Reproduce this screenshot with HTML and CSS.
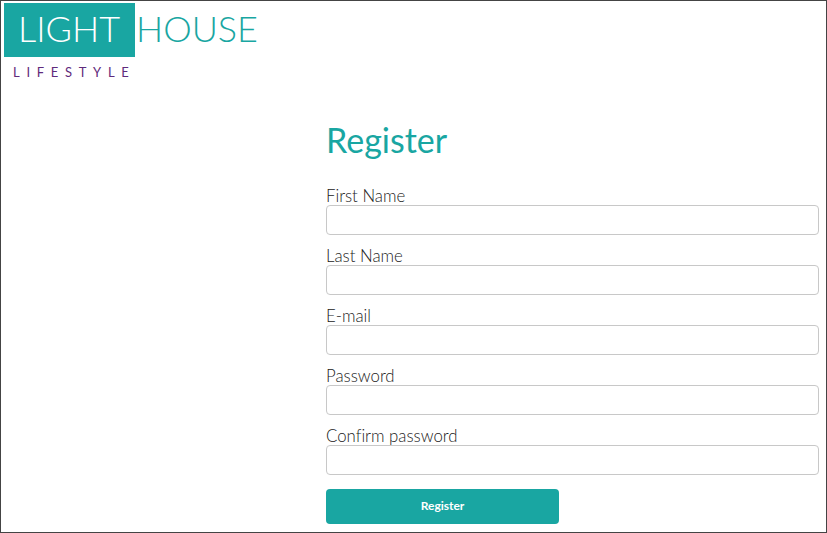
FILE: index.html
```html
<!DOCTYPE html>
<html lang="en">
<head>
  <meta charset="UTF-8">
  <meta name="viewport" content="width=device-width, initial-scale=1.0">
  <title>Register</title>
  <link rel="stylesheet" href="styles.css">
</head>
<body>

  <div class="page">
    <!-- Logo -->
    <div class="logo">
      <div class="logo-top">
        <span class="logo-light">LIGHT</span>
        <span class="logo-house">HOUSE</span>
      </div>
      <div class="logo-sub">LIFESTYLE</div>
    </div>

    <!-- Register Form -->
    <form class="register-form">
      <h2>Register</h2>
      <div class="field">
        <label for="first-name">First Name</label>
        <input type="text" id="first-name">
      </div>
      <div class="field">
        <label for="last-name">Last Name</label>
        <input type="text" id="last-name">
      </div>
      <div class="field">
        <label for="email">E-mail</label>
        <input type="email" id="email">
      </div>
      <div class="field">
        <label for="password">Password</label>
        <input type="password" id="password">
      </div>
      <div class="field">
        <label for="confirm-password">Confirm password</label>
        <input type="password" id="confirm-password">
      </div>
      <button type="button">Register</button>
    </form>
  </div>

</body>
</html>
```

FILE: styles.css
```css
html, body {
  margin: 0;
  padding: 0;
}

body {
  font-family: 'Lato', 'Liberation Sans', sans-serif;
  font-variant-ligatures: none;
  background: #fff;
  color: #222;
}

.page {
  box-sizing: border-box;
  width: 827px;
  height: 533px;
  border: 1px solid #444;
  padding: 2px 7px 0 3px;
  overflow: hidden;
}

.logo-top {
  display: flex;
  align-items: flex-start;
}

.logo-light {
  box-sizing: border-box;
  width: 131px;
  height: 54px;
  padding: 3px 0 0 14px;
  background: #19a6a2;
  color: #fff;
  font-size: 36px;
  font-weight: 300;
  line-height: 44px;
}

.logo-house {
  padding: 3px 0 0 1px;
  color: #19a6a2;
  font-size: 36px;
  font-weight: 300;
  line-height: 44px;
}

.logo-sub {
  margin: 7px 0 0 9px;
  color: #5f2a7c;
  font-size: 13px;
  line-height: 16px;
  letter-spacing: 6.7px;
}

.register-form {
  margin: 40px 0 0 322px;
}

.register-form h2 {
  margin: 0 0 26px;
  color: #19a6a2;
  font-size: 34px;
  font-weight: 400;
  line-height: 40px;
}

.field {
  margin-bottom: 11px;
}

.field label {
  display: block;
  height: 19px;
  font-size: 16.8px;
  font-weight: 300;
  line-height: 20px;
}

.field input {
  display: block;
  box-sizing: border-box;
  width: 493px;
  height: 30px;
  border: 1px solid #c8c8c8;
  border-radius: 4px;
  background: #fff;
}

.register-form button {
  display: block;
  width: 233px;
  height: 35px;
  margin-top: 14px;
  padding-bottom: 3px;
  border: none;
  border-radius: 4px;
  background: #19a6a2;
  color: #fff;
  font-family: inherit;
  font-size: 12px;
  font-weight: 700;
  cursor: pointer;
}
```
